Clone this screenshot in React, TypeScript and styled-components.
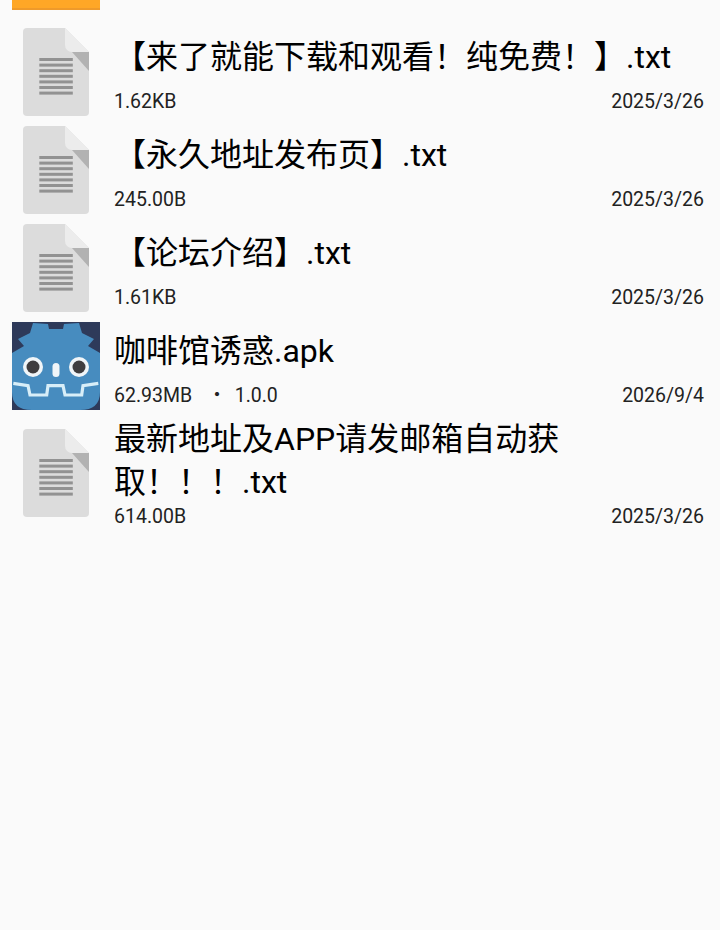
import { FC } from "react";
import styled, { createGlobalStyle } from "styled-components";

const GlobalStyle = createGlobalStyle`
  html, body {
    margin: 0;
    padding: 0;
    background: #fafafa;
  }
  body {
    font-family: Roboto, "Noto Sans CJK SC", sans-serif;
    color: #000;
  }
`;

const Page = styled.div`
  width: 720px;
  height: 930px;
  overflow: hidden;
`;
const FolderStub = styled.div`
  width: 88px;
  height: 10px;
  margin: 0 0 13px 12px;
  box-sizing: border-box;
  background: #ffa726;
  border-bottom: 2px solid #ef9a2a;
`;
const Row = styled.div`
  display: flex;
  align-items: center;
  padding: 0 16px 0 12px;
`;
const IconSlot = styled.div<{ $tall?: boolean }>`
  flex: none;
  width: 88px;
  height: 88px;
  margin-right: 14px;
  margin-bottom: ${(p) => (p.$tall ? "5px" : "0")};
`;
const Info = styled.div<{ $tall?: boolean }>`
  flex: 1;
  min-width: 0;
  height: ${(p) => (p.$tall ? "121px" : "98px")};
  padding-bottom: 7px;
  box-sizing: border-box;
  display: flex;
  flex-direction: column;
`;
const Title = styled.div`
  flex: 1;
  display: flex;
  align-items: center;
  width: 570px;
  padding-top: 1px;
  font-size: 32px;
  line-height: 43px;
`;
const Meta = styled.div`
  flex: none;
  display: flex;
  justify-content: space-between;
  height: 24px;
  font-size: 19.5px;
  line-height: 24px;
  color: #222;
`;
const MetaLeft = styled.span`
  display: flex;
`;
const MetaDot = styled.span`
  margin: 0 8px 0 15px;
`;

const DocIcon: FC = () => (
  <svg width="88" height="88" viewBox="0 0 88 88">
    <path d="M15 0H53L77 24V84a4 4 0 0 1-4 4H15a4 4 0 0 1-4-4V4a4 4 0 0 1 4-4z" fill="#dcdcdc" />
    <path d="M53 0L77 24H60a7 7 0 0 1-7-7z" fill="#ececec" />
    <path d="M60 24H77V43z" fill="#b2b2b2" />
    {[30, 35.6, 41.2, 46.8, 52.4, 58, 63.6].map((y) => (
      <rect key={y} x="27.3" y={y} width="33.5" height="3" fill="#929292" />
    ))}
  </svg>
);

const GodotIcon: FC = () => (
  <svg width="88" height="88" viewBox="0 0 88 88">
    <rect width="88" height="88" fill="#2e3a5a" />
    <path
      d="M21 1L36 2L37 7H51L52 2L67 1L70 11L82 17L76 24L88 31V70Q88 88 68 88H20Q0 88 0 70V31L12 24L6 17L18 11z"
      fill="#478cbf"
    />
    <path
      d="M1.3 61.3L16 63.7L18 73H34.7L36 63.7H51L53 73H69.7L71 63.7L86.3 61.3"
      fill="none"
      stroke="#d8eef8"
      strokeWidth="3.2"
    />
    <circle cx="21" cy="45" r="10" fill="#f0f5f8" />
    <circle cx="21" cy="45" r="6.5" fill="#3f3d3f" />
    <circle cx="67" cy="45" r="10" fill="#f0f5f8" />
    <circle cx="67" cy="45" r="6.5" fill="#3f3d3f" />
    <rect x="40.5" y="41" width="7" height="14" rx="3.5" fill="#f0f5f8" />
  </svg>
);

interface IFile {
  name: string;
  size: string;
  date: string;
  version?: string;
  apk?: boolean;
  tall?: boolean;
}

const files: IFile[] = [
  { name: "【来了就能下载和观看！纯免费！】.txt", size: "1.62KB", date: "2025/3/26" },
  { name: "【永久地址发布页】.txt", size: "245.00B", date: "2025/3/26" },
  { name: "【论坛介绍】.txt", size: "1.61KB", date: "2025/3/26" },
  { name: "咖啡馆诱惑.apk", size: "62.93MB", version: "1.0.0", date: "2026/9/4", apk: true },
  { name: "最新地址及APP请发邮箱自动获取！！！.txt", size: "614.00B", date: "2025/3/26", tall: true }
];

export default function App() {
  return (
    <Page>
      <GlobalStyle />
      <FolderStub />
      {files.map((file) => (
        <Row key={file.name}>
          <IconSlot $tall={file.tall}>{file.apk ? <GodotIcon /> : <DocIcon />}</IconSlot>
          <Info $tall={file.tall}>
            <Title>{file.name}</Title>
            <Meta>
              <MetaLeft>
                <span>{file.size}</span>
                {file.version && <MetaDot>・</MetaDot>}
                {file.version && <span>{file.version}</span>}
              </MetaLeft>
              <span>{file.date}</span>
            </Meta>
          </Info>
        </Row>
      ))}
    </Page>
  );
}
